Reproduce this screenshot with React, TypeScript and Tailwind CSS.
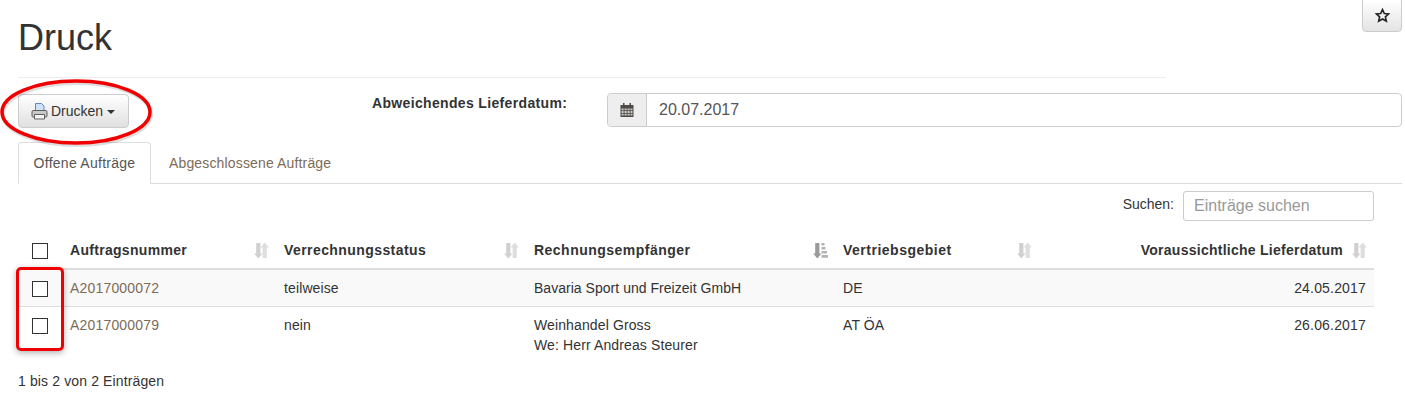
import React from "react";

function SortIcon() {
  return (
    <svg width="15" height="17" viewBox="0 0 15 17" className="shrink-0">
      <path d="M2.200 1h4.200v10.500h2.100L4.300 16.500 0.100 11.500h2.100z" fill="#d0d0d0" />
      <path d="M8.600 16h4.200V5.500h2.100L10.700 0.500 6.500 5.500h2.100z" fill="#dedede" />
    </svg>
  );
}

function SortedIcon() {
  return (
    <svg width="15" height="17" viewBox="0 0 15 17" className="shrink-0">
      <path d="M2.200 1h4.200v10.500h2.100L4.300 16.500 0.100 11.500h2.100z" fill="#9a9a9a" />
      <path d="M8.500 1h3v2.600h-3zM8.500 5h4v2.600h-4zM8.500 9h5.500v2.600H8.500zM8.500 13H15v2.800H8.500z" fill="#b4b4b4" />
    </svg>
  );
}

function PrinterIcon() {
  return (
    <svg width="17" height="17" viewBox="0 0 17 17" className="shrink-0">
      <path d="M4.500 .5h6L13 3v6H4.500z" fill="#cfe2f8" stroke="#5f88c4" strokeWidth="1" />
      <path d="M2 7.500h13a1.500 1.500 0 0 1 1 1.500v4a1 1 0 0 1-1 1H2a1 1 0 0 1-1-1V9a1.500 1.500 0 0 1 1-1.500z" fill="#c9c9c9" stroke="#606060" strokeWidth="1" />
      <path d="M3.500 11.500h10v4.500h-10z" fill="#f4f4f4" stroke="#606060" strokeWidth="1" />
    </svg>
  );
}

function CalendarIcon() {
  return (
    <svg width="14" height="14" viewBox="0 0 13 14" fill="#4f4a45">
      <path d="M2.500 0h1.500v2h5V0h1.500v2H13v12H0V2h2.500z" />
      <path
        d="M1 5.500h2.200v1.800H1zM4 5.500h2.200v1.800H4zM7 5.500h2.200v1.800H7zM10 5.500h2v1.800h-2zM1 8.100h2.200v1.800H1zM4 8.100h2.200v1.800H4zM7 8.100h2.200v1.800H7zM10 8.100h2v1.800h-2zM1 10.700h2.200v1.800H1zM4 10.700h2.200v1.800H4zM7 10.700h2.200v1.800H7zM10 10.700h2v1.800h-2z"
        fill="#c8c8c8"
      />
    </svg>
  );
}

function Check() {
  return <span className="block w-4 h-4 border border-[#333] bg-white" />;
}

function Th({ label, sorted, right, track }: { label: string; sorted?: boolean; right?: boolean; track: string }) {
  return (
    <th className="pl-2 pr-[7px] pb-2 pt-2 font-bold align-bottom">
      <div className={`flex items-center ${right ? "justify-end gap-[9px]" : "justify-between"}`}>
        <span className={track}>{label}</span>
        {sorted ? <SortedIcon /> : <SortIcon />}
      </div>
    </th>
  );
}

export default function App() {
  return (
    <div className="relative w-[1405px] h-[407px] overflow-hidden bg-white text-[14px] leading-5 text-[#333] font-['Liberation_Sans',Arial,sans-serif]">
      {/* favourite button */}
      <button className="absolute right-[3px] -top-px w-10 h-[33px] flex items-center justify-center border border-[#ccc] rounded-b bg-gradient-to-b from-white to-[#e4e4e4]">
        <svg width="15" height="15" viewBox="0 0 24 24" fill="none" stroke="#222" strokeWidth="2.600">
          <path d="M12 2.500l2.900 6.400 6.900.7-5.200 4.600 1.500 6.800-6.100-3.500-6.100 3.500 1.500-6.800-5.200-4.600 6.900-.7z" />
        </svg>
      </button>

      <div className="pl-[18px] pr-[3px]">
        <h1 className="text-[36px] leading-[40px] pt-[18px] pb-[19px] font-normal border-b border-[#eee] w-[1148px]">Druck</h1>

        <div className="flex items-start mt-[15px]">
          <button className="mt-px w-[111px] h-[34px] flex items-center pl-3 border border-[#ccc] rounded bg-gradient-to-b from-white to-[#e0e0e0]">
            <PrinterIcon />
            <span className="ml-[3px]">Drucken</span>
            <span className="ml-[4px] mt-px w-0 h-0 border-x-4 border-x-transparent border-t-4 border-t-[#333]" />
          </button>
          <label className="ml-[243px] font-bold tracking-[0.34px] w-[235px]">Abweichendes Lieferdatum:</label>
          <div className="flex h-[34px] flex-1 border border-[#ccc] rounded">
            <span className="w-[39px] flex items-center justify-center bg-[#eee] border-r border-[#ccc] rounded-l">
              <CalendarIcon />
            </span>
            <span className="flex-1 flex items-center pl-3 text-[16px] text-[#555]">20.07.2017</span>
          </div>
        </div>

        <div className="flex mt-[14px] border-b border-[#ddd] h-[42px]">
          <span className="h-[42px] w-[133px] flex items-center justify-center bg-white border border-[#ddd] border-b-white rounded-t text-[#555] tracking-[0.27px]">Offene Aufträge</span>
          <span className="h-[41px] flex items-center pl-[18px] text-[#7d6c58] tracking-[0.15px]">Abgeschlossene Aufträge</span>
        </div>

        <div className="w-[1356px]">
          <div className="flex justify-end items-start mt-[7px]">
            <span className="mr-[9px] mt-px leading-6">Suchen:</span>
            <span className="w-[191px] h-[30px] flex items-center pl-[10px] border border-[#ccc] rounded-[3px] text-[16px] text-[#999]">Einträge suchen</span>
          </div>

          <table className="w-full table-fixed border-collapse mt-[11px] tracking-[0.12px]">
            <colgroup>
              <col className="w-[44px]" />
              <col className="w-[214px]" />
              <col className="w-[250px]" />
              <col className="w-[309px]" />
              <col className="w-[204px]" />
              <col />
            </colgroup>
            <thead>
              <tr className="border-b-[2px] border-[#ddd] text-left">
                <th className="pl-[14px] pb-[9px] pt-2 align-bottom"><Check /></th>
                <Th label="Auftragsnummer" track="tracking-[0.3px]" />
                <Th label="Verrechnungsstatus" track="tracking-[0.42px]" />
                <Th label="Rechnungsempfänger" sorted track="tracking-[0.48px]" />
                <Th label="Vertriebsgebiet" track="tracking-[0.5px]" />
                <Th label="Voraussichtliche Lieferdatum" right track="tracking-[0.26px]" />
              </tr>
            </thead>
            <tbody>
              <tr className="bg-[#f9f9f9] border-b border-[#ddd]">
                <td className="pl-[14px] pt-[11px] pb-[9px] align-top"><Check /></td>
                <td className="px-2 py-2 align-top text-[#7d6c58] tracking-[0.18px]">A2017000072</td>
                <td className="px-2 py-2 align-top">teilweise</td>
                <td className="px-2 py-2 align-top tracking-[0.03px]">Bavaria Sport und Freizeit GmbH</td>
                <td className="px-2 py-2 align-top">DE</td>
                <td className="px-2 py-2 align-top text-right tracking-[0.18px]">24.05.2017</td>
              </tr>
              <tr>
                <td className="pl-[14px] pt-[11px] pb-[9px] align-top"><Check /></td>
                <td className="px-2 py-2 align-top text-[#7d6c58] tracking-[0.18px]">A2017000079</td>
                <td className="px-2 py-2 align-top">nein</td>
                <td className="px-2 py-2 align-top">Weinhandel Gross<br />We: Herr Andreas Steurer</td>
                <td className="px-2 py-2 align-top">AT ÖA</td>
                <td className="px-2 py-2 align-top text-right tracking-[0.18px]">26.06.2017</td>
              </tr>
            </tbody>
          </table>

          <div className="mt-[8px] tracking-[0.13px]">1 bis 2 von 2 Einträgen</div>
        </div>
      </div>

      {/* hand-drawn annotations */}
      <svg className="absolute left-0 top-[76px] pointer-events-none" width="156" height="76" viewBox="0 0 156 76" fill="none">
        <ellipse cx="77" cy="38" rx="74" ry="31" stroke="#000" strokeOpacity="0.13" strokeWidth="4" />
        <ellipse cx="76" cy="36" rx="74" ry="31" stroke="#f00000" strokeWidth="3.500" />
      </svg>
      <div className="absolute left-[16px] top-[267px] w-[48px] h-[84px] border-[3px] border-[#f00000] rounded-[5px] shadow-[0_2px_6px_rgba(0,0,0,0.3)]" />
    </div>
  );
}
